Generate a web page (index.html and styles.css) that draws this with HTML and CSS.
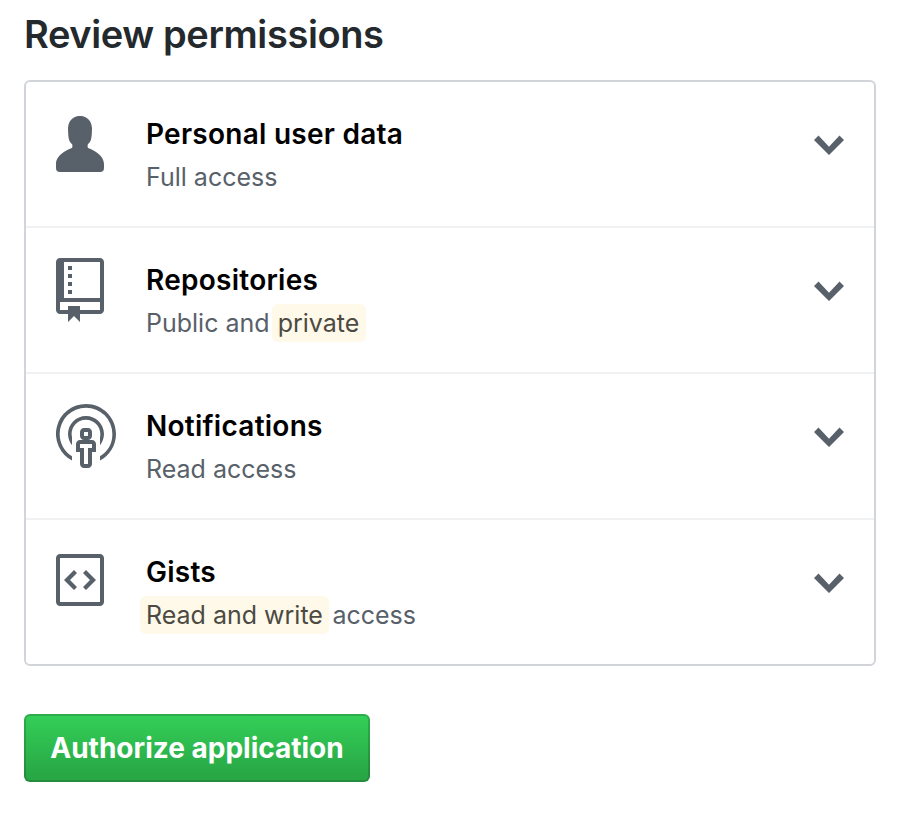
FILE: index.html
```html
<!DOCTYPE html>
<html lang="en">
<head>
<meta charset="utf-8">
<title>Authorize application</title>
<link rel="stylesheet" href="styles.css">
</head>
<body>
<main class="page">
  <h1 class="heading">Review permissions</h1>
  <ul class="permissions">
    <li class="permission">
      <svg class="icon" viewBox="0 0 16 16"><path d="M12 14.002a.998.998 0 0 1-.998.998H1.001A1 1 0 0 1 0 13.999V13c0-2.633 4-4 4-4s.229-.409 0-1c-.841-.62-.944-1.59-1-4 .173-2.413 1.867-3 3-3s2.827.586 3 3c-.056 2.41-.159 3.38-1 4-.229.59 0 1 0 1s4 1.367 4 4v1.002z"/></svg>
      <div class="details">
        <h2 class="title">Personal user data</h2>
        <p class="access">Full access</p>
      </div>
      <svg class="chevron" viewBox="0 0 30 20"><path d="M15 20 0 5 4.5.5 15 11.75 25.5.5 30 5z"/></svg>
    </li>
    <li class="permission">
      <svg class="icon" viewBox="0 0 16 16"><path fill-rule="evenodd" d="M4 9H3V8h1v1zm0-3H3v1h1V6zm0-2H3v1h1V4zm0-2H3v1h1V2zm8-1v12c0 .55-.45 1-1 1H6v2l-1.5-1.5L3 16v-2H1c-.55 0-1-.45-1-1V1c0-.55.45-1 1-1h10c.55 0 1 .45 1 1zm-1 10H1v2h2v-1h3v1h5v-2zm0-10H2v9h9V1z"/></svg>
      <div class="details">
        <h2 class="title">Repositories</h2>
        <p class="access">Public and <mark class="highlight">private</mark></p>
      </div>
      <svg class="chevron" viewBox="0 0 30 20"><path d="M15 20 0 5 4.5.5 15 11.75 25.5.5 30 5z"/></svg>
    </li>
    <li class="permission">
      <svg class="icon" viewBox="0 0 16 16"><path fill-rule="evenodd" d="M9 9H8c.55 0 1-.45 1-1V7c0-.55-.45-1-1-1H7c-.55 0-1 .45-1 1v1c0 .55.45 1 1 1H6c-.55 0-1 .45-1 1v2h1v3c0 .55.45 1 1 1h1c.55 0 1-.45 1-1v-3h1v-2c0-.55-.45-1-1-1zM7 7h1v1H7V7zm2 4H8v4H7v-4H6v-1h3v1zm2.09-3.5c0-1.98-1.61-3.59-3.59-3.59A3.593 3.593 0 0 0 4 8.31v1.98c-.61-.77-1-1.73-1-2.8 0-2.48 2.02-4.5 4.5-4.5S12 5.01 12 7.49c0 1.06-.39 2.03-1 2.8V8.31c.06-.27.09-.53.09-.81zm3.91 0c0 2.88-1.63 5.38-4 6.63v-1.05a6.553 6.553 0 0 0 3.09-5.58A6.59 6.59 0 0 0 7.5.91 6.59 6.59 0 0 0 .91 7.5c0 2.36 1.23 4.42 3.09 5.58v1.05A7.497 7.497 0 0 1 7.5 0C11.64 0 15 3.36 15 7.5z"/></svg>
      <div class="details">
        <h2 class="title">Notifications</h2>
        <p class="access">Read access</p>
      </div>
      <svg class="chevron" viewBox="0 0 30 20"><path d="M15 20 0 5 4.5.5 15 11.75 25.5.5 30 5z"/></svg>
    </li>
    <li class="permission">
      <svg class="icon" viewBox="0 0 16 16"><path fill-rule="evenodd" d="M7.5 5L10 7.5 7.5 10l-.75-.75L8.5 7.5 6.75 5.75 7.5 5zm-3 0L2 7.5 4.5 10l.75-.75L3.5 7.5l1.75-1.75L4.5 5zM0 13V2c0-.55.45-1 1-1h10c.55 0 1 .45 1 1v11c0 .55-.45 1-1 1H1c-.55 0-1-.45-1-1zm1 0h10V2H1v11z"/></svg>
      <div class="details">
        <h2 class="title">Gists</h2>
        <p class="access"><mark class="highlight leading">Read and write</mark> access</p>
      </div>
      <svg class="chevron" viewBox="0 0 30 20"><path d="M15 20 0 5 4.5.5 15 11.75 25.5.5 30 5z"/></svg>
    </li>
  </ul>
  <button class="authorize" type="button">Authorize application</button>
</main>
</body>
</html>
```
FILE: styles.css
```css
* {
  box-sizing: border-box;
}

body {
  margin: 0;
  background: #fff;
  color: #24292e;
  font-family: Inter, "Liberation Sans", sans-serif;
}

.page {
  width: 900px;
  padding: 10px 24px 0;
}

.heading {
  margin: 0 0 22px;
  font-size: 38px;
  line-height: 48px;
  font-weight: 600;
  letter-spacing: -0.38px;
}

.permissions {
  margin: 0 0 48px;
  padding: 0;
  list-style: none;
  border: 2px solid #d1d5da;
  border-radius: 6px;
}

.permission {
  display: flex;
  height: 146px;
  padding: 30px;
  border-bottom: 2px solid #eff1f3;
}

.permission:last-child {
  height: 144px;
  border-bottom: 0;
}

.icon {
  flex: none;
  width: 64px;
  height: 64px;
  margin-right: 26px;
  fill: #586069;
}

.details {
  flex: 1;
}

.title {
  margin: 0;
  color: #000;
  font-size: 28px;
  line-height: 44px;
  font-weight: 600;
  letter-spacing: 0.26px;
}

.access {
  margin: 0;
  color: #586069;
  font-size: 25px;
  line-height: 42px;
  white-space: nowrap;
}

.highlight {
  margin: 0 -4px 0 -5px;
  padding: 4px 6.5px 4px 6px;
  background: #fff9ea;
  border-radius: 6px;
  color: #4c4a42;
}

.leading {
  margin-left: -6px;
}

.chevron {
  flex: none;
  width: 30px;
  height: 20px;
  margin-top: 23px;
  fill: #586069;
}

.authorize {
  display: block;
  width: 346px;
  height: 68px;
  padding: 0;
  border: 2px solid rgba(27, 31, 35, 0.2);
  border-radius: 6px;
  background: linear-gradient(#34d058, #28a745 90%) -2px -2px / 110% 68px;
  color: #fff;
  font: inherit;
  font-size: 28px;
  font-weight: 700;
}
```
